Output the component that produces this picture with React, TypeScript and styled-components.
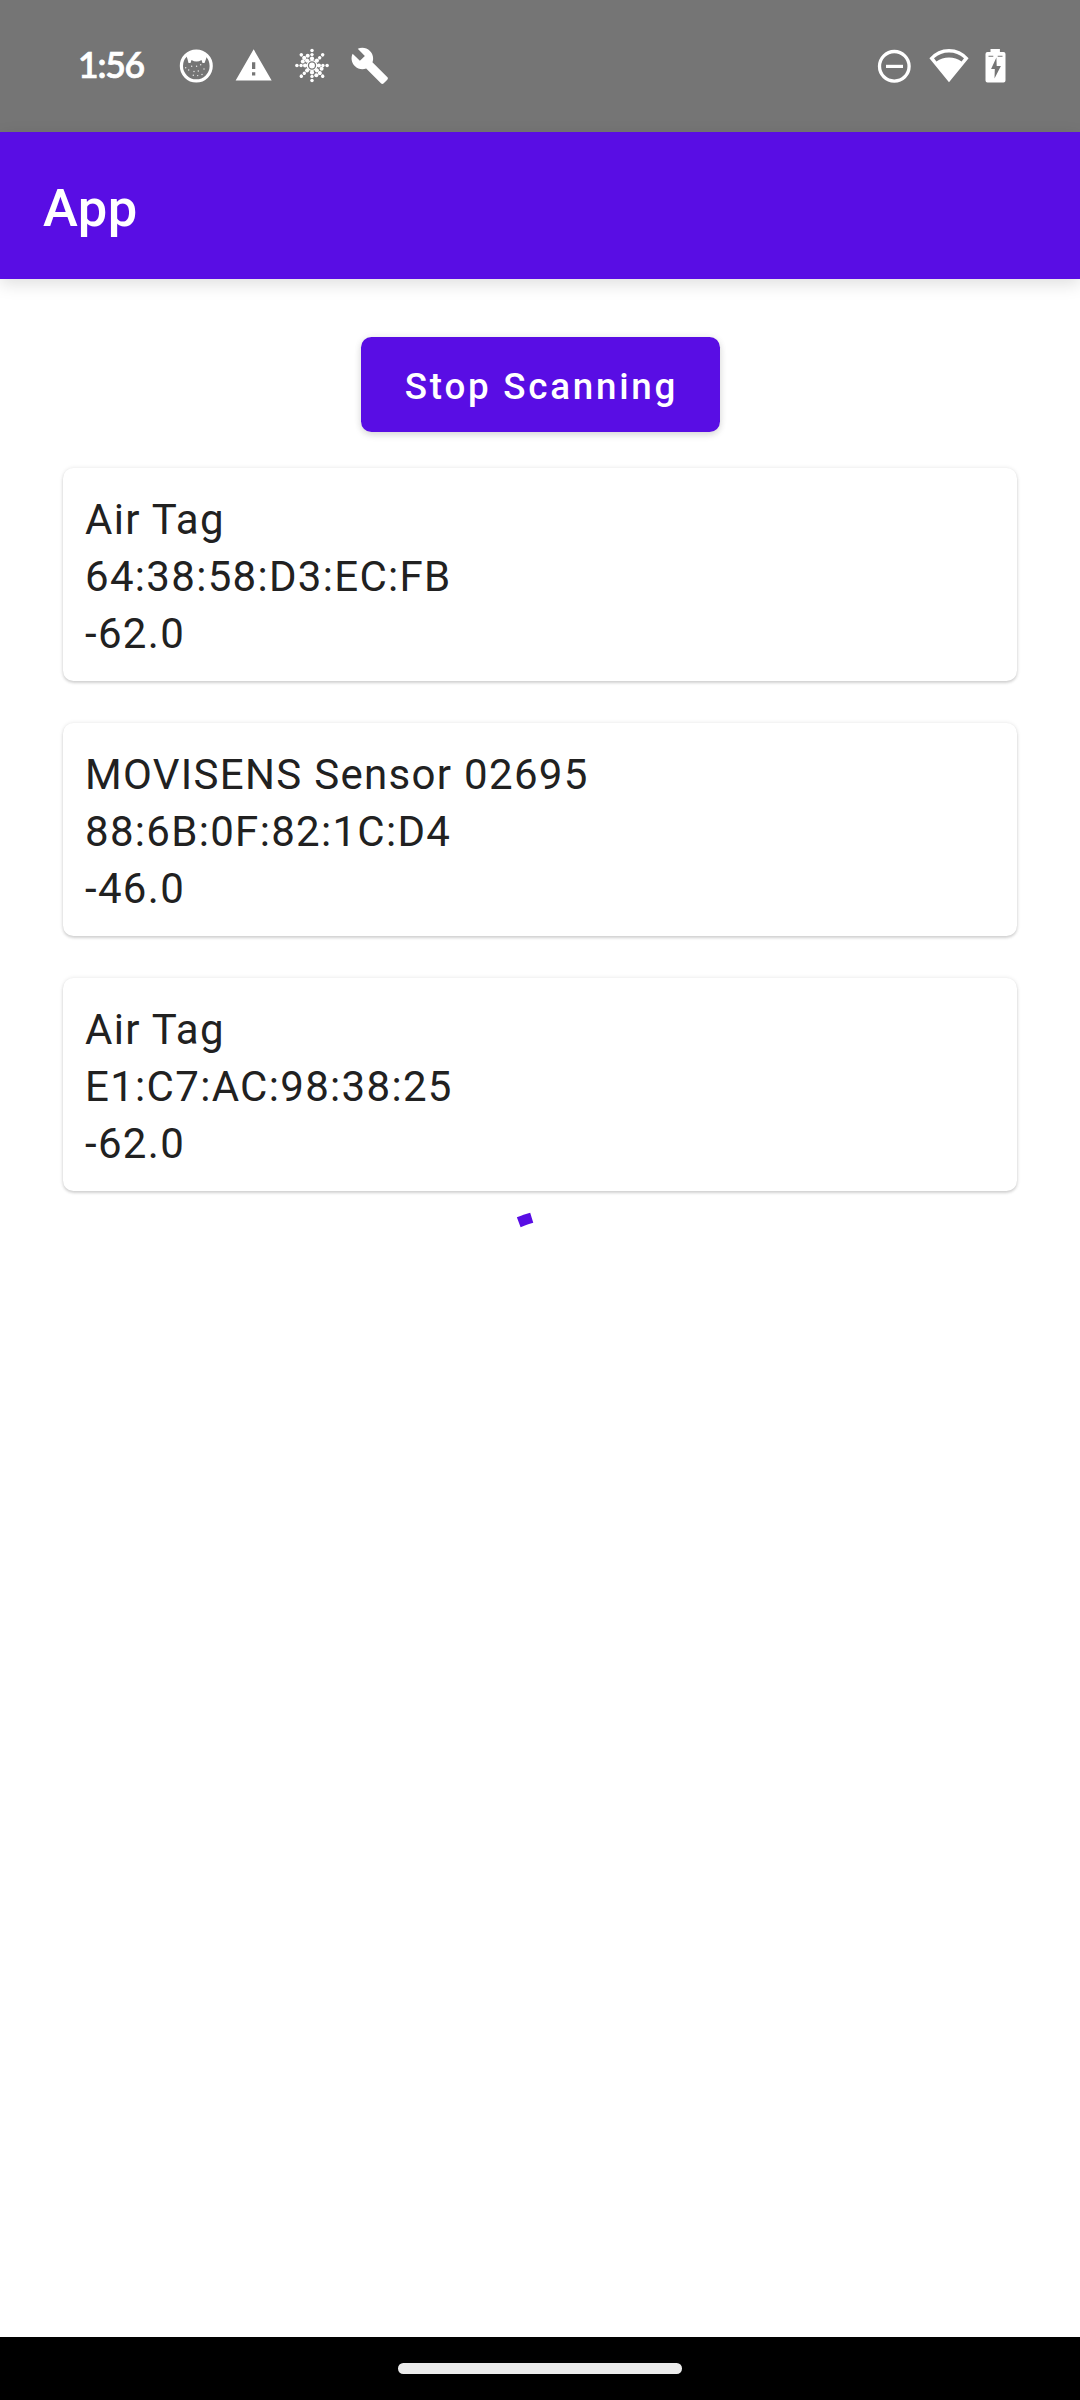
import React from "react";
import styled, { createGlobalStyle } from "styled-components";

const PRIMARY = "#590de4";

const GlobalStyle = createGlobalStyle`
  html, body { margin: 0; background: #ffffff; }
  *, *::before, *::after { box-sizing: border-box; }
`;

const Screen = styled.div`
  display: flex;
  flex-direction: column;
  width: 1080px;
  height: 2400px;
  overflow: hidden;
  background: #ffffff;
  font-family: Roboto, "Liberation Sans", sans-serif;
`;

const StatusBar = styled.header`
  display: flex;
  flex: none;
  align-items: center;
  justify-content: space-between;
  height: 132px;
  padding: 0 73px 0 78px;
  background: #757575;
  color: #ffffff;
`;

const StatusGroup = styled.div<{ $gap: number }>`
  display: flex;
  align-items: center;
  gap: ${(p) => p.$gap}px;
`;

const Clock = styled.time`
  width: 80px;
  padding-bottom: 2px;
  font-family: Lato, "Open Sans", sans-serif;
  font-size: 35.5px;
  font-weight: 600;
  line-height: 40px;
  letter-spacing: -1.2px;
  white-space: nowrap;
  -webkit-text-stroke: 0.7px currentColor;
`;

const Glyph = styled.svg`
  display: block;
  flex: none;
  fill: currentColor;
`;

const AppBar = styled.div`
  display: flex;
  flex: none;
  align-items: center;
  height: 147px;
  padding: 5px 43px 0;
  background: ${PRIMARY};
  color: #ffffff;
  box-shadow: 0 5px 16px rgba(0, 0, 0, 0.13);
`;

const Title = styled.h1`
  margin: 0;
  font-size: 52.5px;
  font-weight: 500;
  line-height: 62px;
  letter-spacing: 0.39px;
`;

const Content = styled.main`
  display: flex;
  flex: 1;
  flex-direction: column;
  align-items: center;
  padding: 58px 63px 0;
`;

const ScanButton = styled.button`
  width: 359px;
  height: 95px;
  padding: 3px 0 0 3px;
  border: 0;
  border-radius: 10.5px;
  background: ${PRIMARY};
  color: #ffffff;
  font-family: inherit;
  font-size: 36.75px;
  font-weight: 500;
  letter-spacing: 2.75px;
  white-space: nowrap;
  box-shadow: 0 3px 7px rgba(0, 0, 0, 0.13), 0 0 8px rgba(0, 0, 0, 0.06);
`;

const DeviceList = styled.ul`
  display: flex;
  flex-direction: column;
  align-self: stretch;
  gap: 42px;
  margin: 36px 0 21px;
  padding: 0;
  list-style: none;
`;

const DeviceCard = styled.li`
  height: 213px;
  padding: 21px 22px;
  border-radius: 10.5px;
  background: #ffffff;
  box-shadow: 0 2px 3px rgba(0, 0, 0, 0.15), 0 0 4px rgba(0, 0, 0, 0.1);
`;

const DeviceLine = styled.div`
  height: 57px;
  color: #212121;
  font-size: 42px;
  line-height: 61px;
  letter-spacing: 1.3125px;
  white-space: nowrap;
`;

const Spinner = styled.svg`
  display: block;
  flex: none;
  fill: none;
  stroke: ${PRIMARY};
  stroke-width: 10.5;
  stroke-linecap: square;
`;

const NavigationBar = styled.footer`
  display: flex;
  flex: none;
  justify-content: center;
  align-items: center;
  height: 63px;
  background: #000000;
`;

const HomeHandle = styled.div`
  width: 284px;
  height: 10.5px;
  border-radius: 5.25px;
  background: #ebebeb;
`;

const devices = [
  { name: "Air Tag", address: "64:38:58:D3:EC:FB", rssi: "-62.0" },
  { name: "MOVISENS Sensor 02695", address: "88:6B:0F:82:1C:D4", rssi: "-46.0" },
  { name: "Air Tag", address: "E1:C7:AC:98:38:25", rssi: "-62.0" },
];

const freckles = [
  [9.7, 21.7], [12.7, 24], [18, 25.5], [22.3, 25], [28, 23], [20.6, 20.3],
  [24.7, 18.8], [15.7, 20.2], [17.3, 29.3], [21.7, 29.6], [26, 28.5],
];

function FaceIcon() {
  return (
    <Glyph width="40" height="40" viewBox="0 0 40 40">
      <circle cx="20.3" cy="20" r="14.9" fill="none" stroke="currentColor" strokeWidth="3.2" />
      <path d="M10 9Q14 4 20.3 4T31 9L30 13L28.5 17L26.5 17L25.5 14Q20.5 17 15.5 14L14.5 17L12.5 17L11.5 13Z" />
      {freckles.map(([x, y]) => (
        <circle key={`${x}-${y}`} cx={x} cy={y} r="0.7" fillOpacity="0.85" />
      ))}
    </Glyph>
  );
}

function WarningIcon() {
  return (
    <Glyph width="39.3" height="39.3" viewBox="0 0 24 24">
      <path d="M1 21h22L12 2 1 21zm12-3h-2v-2h2v2zm0-4h-2v-4h2v4z" />
    </Glyph>
  );
}

const spokeAngles = [0, 45, 90, 135, 180, 225, 270, 315];
const sideDots = [
  [15.7, 9.8], [12.2, 12], [10.8, 15.6],
  [24.3, 29.2], [27.8, 27], [29.6, 22.8],
];

function VirusIcon() {
  return (
    <Glyph width="40" height="40" viewBox="0 0 40 40">
      <circle cx="20" cy="19.5" r="2.9" />
      <circle cx="20" cy="19.5" r="4.8" fill="none" stroke="currentColor" strokeWidth="1.3" />
      {spokeAngles.map((angle) => (
        <g key={angle} transform={`rotate(${angle} 20 19.5)`}>
          <circle cx="20" cy="12.6" r="2.1" />
          <circle cx="20" cy="8.6" r="1.7" />
          <circle cx="20" cy="4.4" r="1.75" />
        </g>
      ))}
      {sideDots.map(([x, y]) => (
        <circle key={`${x}-${y}`} cx={x} cy={y} r="2" />
      ))}
    </Glyph>
  );
}

function WrenchIcon() {
  return (
    <Glyph width="39.6" height="39.6" viewBox="0 0 24 24">
      <path d="M22.7 19l-9.1-9.1c.9-2.3.4-5-1.5-6.9-2-2-5-2.4-7.4-1.3L9 6 6 9 1.6 4.7C.4 7.1.9 10.1 2.9 12.1c1.9 1.9 4.6 2.4 6.9 1.5l9.1 9.1c.4.4 1 .4 1.4 0l2.3-2.3c.5-.4.5-1.1.1-1.4z" />
    </Glyph>
  );
}

function DoNotDisturbIcon() {
  return (
    <Glyph width="40" height="40" viewBox="0 0 40 40">
      <circle cx="20.3" cy="20.3" r="14.8" fill="none" stroke="currentColor" strokeWidth="3.3" />
      <path d="M12 18.8h17v3.2H12z" />
    </Glyph>
  );
}

function WifiIcon() {
  return (
    <Glyph width="40" height="40" viewBox="0 0 40 40">
      <path
        fillRule="evenodd"
        d="M20 36.2L.4 12.2Q8.6 3.1 20 3.1T39.6 12.2ZM5 12.3L7.4 15.4Q13 11.6 20 11.6T32.6 15.4L35 12.3Q28.5 6.4 20 6.4T5 12.3Z"
      />
    </Glyph>
  );
}

function BatteryIcon() {
  return (
    <Glyph width="23" height="40" viewBox="0.5 0 23 40">
      <path
        fillRule="evenodd"
        d="M7 3H16.4V6H20Q22 6 22 8V34.6Q22 36.6 20 36.6H4Q2 36.6 2 34.6V8Q2 6 4 6H7ZM5 9.8V10.8H9.8V9.8ZM14.2 9.8V10.8H19V9.8ZM12.9 11.5L7.6 23H11.3L11 32.5L17.4 20H13.2Z"
      />
    </Glyph>
  );
}

export default function App() {
  return (
    <>
      <GlobalStyle />
      <Screen>
        <StatusBar>
          <StatusGroup $gap={18.1}>
            <Clock>1:56</Clock>
            <FaceIcon />
            <WarningIcon />
            <VirusIcon />
            <WrenchIcon />
          </StatusGroup>
          <StatusGroup $gap={14.8}>
            <DoNotDisturbIcon />
            <WifiIcon />
            <BatteryIcon />
          </StatusGroup>
        </StatusBar>
        <AppBar>
          <Title>App</Title>
        </AppBar>
        <Content>
          <ScanButton>Stop Scanning</ScanButton>
          <DeviceList>
            {devices.map((device) => (
              <DeviceCard key={device.address}>
                <DeviceLine>{device.name}</DeviceLine>
                <DeviceLine>{device.address}</DeviceLine>
                <DeviceLine>{device.rssi}</DeviceLine>
              </DeviceCard>
            ))}
          </DeviceList>
          <Spinner width="105" height="105" viewBox="0 0 105 105">
            <circle
              cx="52.5"
              cy="52.5"
              r="47.25"
              strokeDasharray="3.3 400"
              transform="rotate(-110.9 52.5 52.5)"
            />
          </Spinner>
        </Content>
        <NavigationBar>
          <HomeHandle />
        </NavigationBar>
      </Screen>
    </>
  );
}
